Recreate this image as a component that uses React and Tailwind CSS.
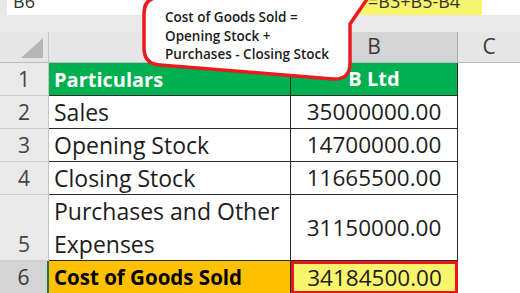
import React from "react";

const rows = [
  { n: "1", a: "Particulars", b: "B Ltd", head: true },
  { n: "2", a: "Sales", b: "35000000.00" },
  { n: "3", a: "Opening Stock", b: "14700000.00" },
  { n: "4", a: "Closing Stock", b: "11665500.00" },
  { n: "5", a: "Purchases and Other Expenses", b: "31150000.00", tall: true },
  { n: "6", a: "Cost of Goods Sold", b: "34184500.00", total: true },
];

function Callout() {
  return (
    <div className="absolute left-[136px] top-[-12px] w-[250px] h-[96px]">
      <svg width="250" height="96" viewBox="136 -12 250 96" className="absolute inset-0">
        <path
          d="M161,-3 H328 L376,-14 L350,24 V63 Q350,80 333,79 L160,65 Q144,64 144,48 V14 Q144,-3 161,-3 Z"
          fill="#ffffff"
          stroke="#ea1b1f"
          strokeWidth="3.5"
          strokeLinejoin="round"
        />
      </svg>
      <div className="absolute left-[29px] top-[20px] text-[13.5px] leading-[18.5px] font-semibold text-[#1b1b1b] [font-family:'Open_Sans',sans-serif]">
        <div>Cost of Goods Sold =</div>
        <div>Opening Stock +</div>
        <div>Purchases - Closing Stock</div>
      </div>
    </div>
  );
}

export default function App() {
  return (
    <div className="relative w-[520px] h-[293px] overflow-hidden bg-[#e9e9e9] [font-family:'Open_Sans',sans-serif]">
      {/* formula bar */}
      <div className="flex h-[15px]">
        <div className="w-[7px]" />
        <div className="w-[136px] bg-white overflow-hidden">
          <div className="mt-[-10px] ml-[6px] text-[18px] leading-[22px] text-[#333]">B6</div>
        </div>
        <div className="w-[217px]" />
        <div className="w-[122px] bg-[#f8f46c] overflow-hidden">
          <div className="mt-[-10px] ml-[8px] text-[18px] leading-[22px] text-[#333]">=B3+B5-B4</div>
        </div>
        <div className="flex-1 bg-white" />
      </div>
      <div className="h-[17px]" />

      {/* column headers */}
      <div className="flex h-[31px] border-b border-[#bdbdbd] bg-[#e6e6e6]">
        <div className="w-[49px] border-r border-[#c4c4c4] flex items-end justify-end pr-[5px] pb-[4px]">
          <svg width="22" height="20" viewBox="0 0 22 20">
            <polygon points="22,0 22,20 0,20" fill="#b5b5b5" />
          </svg>
        </div>
        <div className="w-[242px] border-r border-[#c4c4c4] flex items-center justify-center text-[21px] text-[#444]">A</div>
        <div className="w-[167px] bg-[#d4d4d4] border-r border-[#ababab] flex items-center justify-center text-[21px] text-[#3a3a3a]">B</div>
        <div className="flex-1 flex items-center justify-center text-[21px] text-[#3a3a3a]">C</div>
      </div>

      {/* rows */}
      {rows.map((r) => (
        <div key={r.n} className={`flex ${r.tall ? "h-[66px]" : "h-[33px]"}`}>
          <div
            className={`w-[49px] flex items-end justify-center pb-[1px] text-[21px] leading-[30px] border-b ${
              r.total
                ? "bg-[#d4d4d4] border-r-2 border-r-[#217346] border-b-[#c4c4c4] text-[#3a3a3a]"
                : "border-r border-r-[#c4c4c4] border-b-[#cfcfcf] text-[#444]"
            }`}
          >
            {r.n}
          </div>
          <div
            className={`w-[242px] flex items-center pl-[5px] leading-[33px] border-b border-r border-[#2a2a2a] ${
              r.head
                ? "bg-[#00b050] text-white font-bold text-[20px]"
                : r.total
                ? "bg-[#ffc000] text-black font-bold text-[20.5px]"
                : "bg-white text-[#1c1c1c] text-[23px]"
            }`}
          >
            {r.a}
          </div>
          <div
            className={`w-[167px] flex items-center justify-center ${
              r.head
                ? "bg-[#00b050] text-white font-bold text-[20px] border-b border-r border-[#2a2a2a]"
                : r.total
                ? "bg-[#f9f56c] text-[#1c1c1c] text-[22.5px] border-[3px] border-[#e8161b]"
                : "bg-white text-[#1c1c1c] text-[22.5px] border-b border-r border-[#2a2a2a]"
            }`}
          >
            {r.b}
          </div>
          <div className="flex-1 bg-white" />
        </div>
      ))}

      <Callout />
    </div>
  );
}
